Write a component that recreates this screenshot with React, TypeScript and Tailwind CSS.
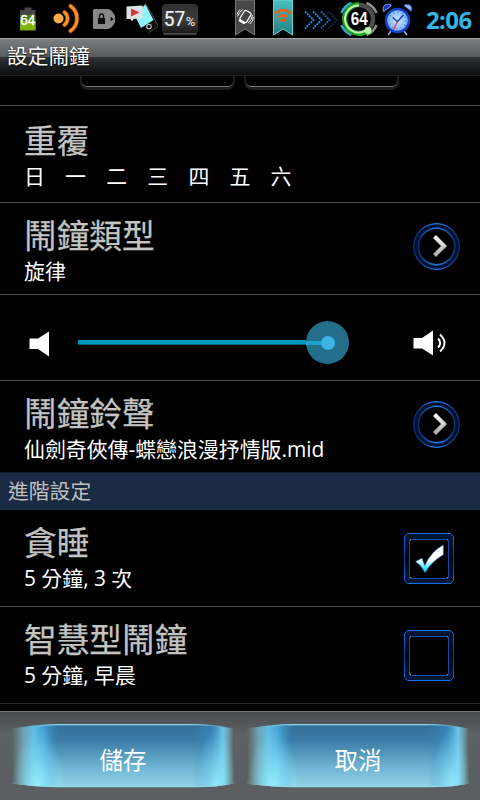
import { ReactNode } from "react";

const days = ["日", "一", "二", "三", "四", "五", "六"];

// Every status icon is drawn on the coordinates of the bar itself
function StatusIcon({ x, w, children }: { x: number; w: number; children: ReactNode }) {
  return (
    <svg className="shrink-0" width={w} height={38} viewBox={`${x} 0 ${w} 38`}>
      {children}
    </svg>
  );
}

function StatusBar() {
  return (
    <header className="flex h-[38px] shrink-0 items-center bg-black pl-4">
      <StatusIcon x={16} w={28}>
        <path d="M24.500 7.500h7v2.500h4v20.500h-15.500V10h4.500z" fill="#454545" />
        <path d="M20 15h15.500v15H20z" fill="#4c7a10" />
        <path d="M20 21h15.500v9.300H20z" fill="#7eb20b" />
        <text x="20.300" y="25" fontSize="14.500" fill="#fff" stroke="#fff" strokeWidth=".4" fontFamily="Liberation Sans, sans-serif" textLength="15" lengthAdjust="spacingAndGlyphs">64</text>
      </StatusIcon>
      <StatusIcon x={44} w={42}>
        <circle cx="58.500" cy="18.500" r="5" fill="#ffaa4a" />
        <g fill="none" stroke="#7a3d08" strokeWidth="4.600" strokeLinecap="round">
          <path d="M64.500 12.300a8 8 0 0 1 0 12.600" />
          <path d="M70.500 6a15.300 15.300 0 0 1 0 25" />
        </g>
        <g fill="none" stroke="#f79425" strokeWidth="3" strokeLinecap="round">
          <path d="M64.500 12.300a8 8 0 0 1 0 12.600" />
          <path d="M70.500 6a15.300 15.300 0 0 1 0 25" />
        </g>
      </StatusIcon>
      <StatusIcon x={86} w={34}>
        <path d="M94 9h14.500q4.500 2 6.500 7v6q-2 5-6.500 7H94l-1-1V10z" fill="#878787" />
        <path d="M98 18h7v6h-7z" fill="#0b0b0b" />
        <path d="M99.500 18v-2a2 2 0 0 1 4 0v2" fill="none" stroke="#0b0b0b" strokeWidth="1.300" />
        <path d="M111 17.500l2 1.500-2 1.500z" fill="#111" stroke="#111" />
      </StatusIcon>
      <StatusIcon x={120} w={40}>
        <path d="M133 12l13-9 11.500 21-2 4-8 4z" fill="#101010" />
        <path d="M145.500 3.500l12 21c.5 2-1 4-9 8" fill="none" stroke="#555" strokeWidth=".9" />
        <path d="M134 14l11.500-9.500 8 15.500-12.500 8z" fill="#8df3f8" />
        <circle cx="149" cy="26.500" r="2.300" fill="#111" stroke="#bbb" strokeWidth="1.100" />
        <path d="M126.500 6.500l16-1v12.500l-9 1-1.500 2.500-1.500-2.500h-4z" fill="#dfe3e4" />
        <path d="M131 8.500l8.500 4-8.500 4z" fill="#d8363a" />
      </StatusIcon>
      <StatusIcon x={160} w={40}>
        <defs>
          <linearGradient id="pct" x1="0" y1="0" x2="0" y2="1">
            <stop offset="0" stopColor="#303030" />
            <stop offset=".55" stopColor="#3c3c3c" />
            <stop offset="1" stopColor="#161616" />
          </linearGradient>
        </defs>
        <rect x="162" y="4" width="36" height="30.500" rx="3.500" fill="url(#pct)" />
        <path d="M163.500 34h33" stroke="#777" strokeWidth="1" />
        <text x="163.800" y="26" fontSize="20.500" fill="#f2f2f2" stroke="#f2f2f2" strokeWidth=".2" fontFamily="Roboto, sans-serif" textLength="21.500" lengthAdjust="spacingAndGlyphs">57</text>
        <text x="185.700" y="26" fontSize="12.500" fill="#eee" fontFamily="Roboto, sans-serif" textLength="9.500" lengthAdjust="spacingAndGlyphs">%</text>
      </StatusIcon>
      <div className="w-[30px] shrink-0" />
      <StatusIcon x={230} w={30}>
        <path d="M235.500 0h19v35l-9.500-6-9.500 6z" fill="#484848" stroke="#777" />
        <rect x="-3.800" y="-5.500" width="7.600" height="11" rx="1.500" transform="translate(245.500 16.500) rotate(32)" fill="#444" stroke="#fff" strokeWidth="1.200" />
        <path d="M239.500 19l6 3.800-1.500 1.500-5.500-3.300z" fill="#fff" />
        <g fill="none" stroke="#eee" strokeWidth="1">
          <path d="M242.500 9.500q-3.500 3-5 7M240 9.500q-2 2-3 5M248 23q4-3 4.500-8M250 24q3-3 3.500-7" />
        </g>
      </StatusIcon>
      <StatusIcon x={260} w={40}>
        <defs>
          <linearGradient id="teal" x1="0" y1="0" x2="0" y2="1">
            <stop offset="0" stopColor="#47bfc0" />
            <stop offset="1" stopColor="#267f82" />
          </linearGradient>
        </defs>
        <path d="M273.500 0h19v35l-9.500-6-9.500 6z" fill="url(#teal)" stroke="#5fd6d6" />
        <g fill="none" stroke="#fa5a0a" strokeWidth="2.400">
          <path d="M275.200 13.500q7.800-7 15.600 0" />
          <path d="M278.300 17.300q4.700-4 9.400 0" />
        </g>
        <ellipse cx="283" cy="20.300" rx="2.600" ry="1.900" fill="#fa5a0a" />
      </StatusIcon>
      <StatusIcon x={300} w={38}>
        <g fill="none" strokeWidth="1.900" strokeDasharray="2 .830">
          <path d="M305 11.500l8.500 8.500-8.500 8.500" stroke="#1b8dff" />
          <path d="M313 11.500l8.500 8.500-8.500 8.500" stroke="#1b8dff" />
          <path d="M321 11.500l8.500 8.500-8.500 8.500" stroke="#126bbd" />
          <path d="M328.500 11.500l8.500 8.500-8.500 8.500" stroke="#0a2e4c" />
        </g>
      </StatusIcon>
      <StatusIcon x={338} w={42}>
        <g fill="none">
          <path d="M341.500 13a18.500 18.500 0 0 1 10-10M341.500 25a18.500 18.500 0 0 0 10 10" stroke="#38a4c8" strokeWidth="2.600" />
          <path d="M366.500 3a18.500 18.500 0 0 1 10 10M376.500 25a18.500 18.500 0 0 1-10 10" stroke="#909090" strokeWidth="2.600" />
          <circle cx="359" cy="19" r="14" stroke="#4d4d4d" strokeWidth="4.500" />
          <path d="M359 4.500a14.500 14.500 0 1 0 9 26" stroke="#1fa319" strokeWidth="5" />
          <path d="M359 5.500a13.500 13.500 0 1 0 8 24" stroke="#c5f3b9" strokeWidth="2" />
        </g>
        <circle cx="368" cy="30.500" r="3.400" fill="#b8f5a4" />
        <text x="350.700" y="25" fontSize="17.500" fontWeight="700" fill="#fff" fontFamily="Liberation Sans, sans-serif" textLength="17" lengthAdjust="spacingAndGlyphs">64</text>
      </StatusIcon>
      <StatusIcon x={380} w={38}>
        <defs>
          <radialGradient id="clock">
            <stop offset="0" stopColor="#c9e7ff" />
            <stop offset="1" stopColor="#75b0fa" />
          </radialGradient>
        </defs>
        <path d="M391 31l-3 4M404 31l3 4" stroke="#8eaee8" strokeWidth="1.600" />
        <path d="M383.500 11.500q-1.500-6 3-7t4.500 1.500z" fill="#1836b8" stroke="#89b0ff" strokeWidth=".9" />
        <path d="M411.500 11.500q1.500-6-3-7t-4.500 1.500z" fill="#8fb9ee" stroke="#1c43c0" strokeWidth=".9" />
        <circle cx="397.500" cy="20.500" r="11.500" fill="url(#clock)" stroke="#173fc7" strokeWidth="2.500" />
        <circle cx="397.500" cy="20.500" r="8.300" fill="none" stroke="#3d70db" strokeWidth="1.200" strokeDasharray="1 3.340" />
        <path d="M392.500 17.500l5 4 6-6.500" fill="none" stroke="#1d3c9b" strokeWidth="1.300" />
        <path d="M397.500 21.500l-4 8" stroke="#e02b72" strokeWidth="1.300" />
      </StatusIcon>
      <span className="ml-[7px] pt-px pl-px text-[24px] leading-[38px] font-bold tracking-[-0.6px] text-[#33b5e5]">2:06</span>
    </header>
  );
}

function Row({ title, note, className, children }: { title: string; note: ReactNode; className: string; children?: ReactNode }) {
  return (
    <section className={`flex shrink-0 items-start justify-between border-b pl-6 ${className}`}>
      <div>
        <h2 className="h-[41px] text-[32.7px] leading-[42px] whitespace-nowrap text-[#c3c3c3] [-webkit-text-stroke:0.25px_#c3c3c3]">{title}</h2>
        <div className="h-[30px] text-[20.9px] leading-[30px] whitespace-nowrap text-white">{note}</div>
      </div>
      {children}
    </section>
  );
}

function ArrowButton() {
  return (
    <button className="mt-[7px] mr-5 h-12 w-12" aria-label="open">
      <svg width="48" height="48" viewBox="-.5 -.5 48 48" fill="none">
        <defs>
          <linearGradient id="ring" x1="0" y1="0" x2="1" y2="0">
            <stop offset="0" stopColor="#07307c" />
            <stop offset=".5" stopColor="#207be8" />
            <stop offset="1" stopColor="#0b3478" />
          </linearGradient>
          <linearGradient id="arrow" x1="0" y1="0" x2="0" y2="1">
            <stop offset="0" stopColor="#f5f5f5" />
            <stop offset="1" stopColor="#aaa" />
          </linearGradient>
        </defs>
        <circle cx="24" cy="24" r="20.500" stroke="#020f2e" strokeWidth="5" />
        <circle cx="24" cy="24" r="22.800" stroke="url(#ring)" strokeWidth="1.200" />
        <circle cx="24" cy="24" r="18.200" stroke="url(#ring)" strokeWidth="1.500" />
        <path d="M22 14l9.500 9.500-9.500 9.500" stroke="url(#arrow)" strokeWidth="4.200" />
      </svg>
    </button>
  );
}

function Checkbox({ checked }: { checked?: boolean }) {
  return (
    <button className="mt-[11px] mr-[26px] h-[51px] w-[50px]" role="checkbox" aria-checked={!!checked}>
      <svg width="50" height="51" viewBox="0 0 50 51" fill="none">
        <defs>
          <linearGradient id="frame" x1="0" y1="0" x2="0" y2="1">
            <stop offset="0" stopColor="#021738" />
            <stop offset=".5" stopColor="#01030f" />
            <stop offset="1" stopColor="#021738" />
          </linearGradient>
          <linearGradient id="edge" x1="0" y1="0" x2="0" y2="1">
            <stop offset="0" stopColor="#1272ee" />
            <stop offset=".5" stopColor="#08379a" />
            <stop offset="1" stopColor="#1272ee" />
          </linearGradient>
          <linearGradient id="tick" x1="0" y1="0" x2="0" y2="1">
            <stop offset=".55" stopColor="#fff" />
            <stop offset=".9" stopColor="#20d8ff" />
          </linearGradient>
        </defs>
        <path d="M3.500.5h43l3 3v44l-3 3h-43l-3-3v-44z" fill="url(#frame)" stroke="url(#edge)" />
        <rect x="5.500" y="6.500" width="39" height="39" rx="1.500" fill="#000" stroke="#0c4bb0" />
        <path d="M6 7h1M43 7h1M6 44.500h1M43 44.500h1" stroke="#999" />
        {checked && (
          <path d="M11.500 28.500l6.500-3.300 2.700 7.500Q27 18.500 39.300 12v9.700Q28 28 21 39.500 17 32 11.500 28.500z" fill="url(#tick)" stroke="#1b86ea" strokeWidth=".6" />
        )}
      </svg>
    </button>
  );
}

function FooterButton({ id, label }: { id: string; label: string }) {
  return (
    <button className="relative h-[64px] w-[222px] text-[23.5px] text-white">
      <svg className="absolute inset-0" width="222" height="64" viewBox="0 0 222 64">
        <defs>
          <linearGradient id={`${id}-fill`} x1="0" y1="0" x2="0" y2="1">
            <stop offset="0" stopColor="#356e98" />
            <stop offset=".25" stopColor="#3a7ba5" />
            <stop offset=".65" stopColor="#6bb1d0" />
            <stop offset="1" stopColor="#97d6e9" />
          </linearGradient>
          <linearGradient id={`${id}-glow`} x1="0" y1="0" x2="1" y2="0">
            <stop offset="0" stopColor="#5c5f62" />
            <stop offset=".05" stopColor="#6fa0ae" />
            <stop offset=".095" stopColor="#62bce4" />
            <stop offset=".14" stopColor="#4eb4ea" stopOpacity=".75" />
            <stop offset=".21" stopColor="#3a96d0" stopOpacity="0" />
            <stop offset=".81" stopColor="#2f87c4" stopOpacity="0" />
            <stop offset=".9" stopColor="#3a96d0" stopOpacity=".5" />
            <stop offset=".95" stopColor="#74cdf2" stopOpacity=".9" />
            <stop offset=".975" stopColor="#6b9dac" />
            <stop offset="1" stopColor="#5c5f62" />
          </linearGradient>
          <radialGradient id={`${id}-shine`}>
            <stop offset="0" stopColor="#a5fbff" />
            <stop offset="1" stopColor="#8ff0ff" stopOpacity="0" />
          </radialGradient>
          <linearGradient id={`${id}-line`} x1="0" y1="0" x2="1" y2="0">
            <stop offset=".06" stopColor="#9ae8f7" stopOpacity="0" />
            <stop offset=".2" stopColor="#8fd9ee" />
            <stop offset=".8" stopColor="#8fd9ee" />
            <stop offset=".96" stopColor="#9ae8f7" stopOpacity="0" />
          </linearGradient>
          <clipPath id={`${id}-shape`}>
            <path d="M0 4.500Q20 1 45 .5H187Q205 1 222 4.500V59.500Q205 63 187 63H45Q20 62.500 0 59.500z" />
          </clipPath>
        </defs>
        <g clipPath={`url(#${id}-shape)`}>
          <rect width="222" height="64" fill={`url(#${id}-fill)`} />
          <rect width="222" height="64" fill={`url(#${id}-glow)`} />
          <ellipse cx="26" cy="62" rx="26" ry="56" fill={`url(#${id}-shine)`} opacity=".8" />
          <ellipse cx="204" cy="62" rx="20" ry="56" fill={`url(#${id}-shine)`} opacity=".7" />
        </g>
        <path d="M0 5Q20 1 45 .7H187Q205 1 222 5M0 59Q20 62.300 45 62.600H187Q205 62.600 222 59" fill="none" stroke={`url(#${id}-line)`} strokeWidth="1.300" />
      </svg>
      <span className="relative top-[5px]">{label}</span>
    </button>
  );
}

function App() {
  return (
    <div className="flex h-[800px] w-[480px] flex-col overflow-hidden bg-black font-['Open_Sans','Noto_Sans_CJK_TC',sans-serif]">
      <StatusBar />
      <h1 className="h-[38px] shrink-0 border-t border-b border-t-[#a0a2a3] border-b-[#252525] bg-[linear-gradient(#7b7f81_0%,#585b5d_50%,#323334_50%,#0c0d0e_100%)] pl-[7px] text-[20.7px] leading-[35px] text-white [text-shadow:0_1px_2px_#000]">
        設定鬧鐘
      </h1>

      <div className="flex h-[30px] shrink-0 items-start gap-[9px] border-b border-[#4d4d4d] pl-20">
        <div className="h-[14px] w-[155px] rounded-b-[8px] border-x-2 border-b-3 border-[#1d1d1d] bg-black">
          <div className="h-[11px] rounded-b-[5px] border-b border-[#757575]" />
        </div>
        <div className="h-[14px] w-[155px] rounded-b-[8px] border-x-2 border-b-3 border-[#1d1d1d] bg-black">
          <div className="h-[11px] rounded-b-[5px] border-b border-[#757575]" />
        </div>
      </div>

      <Row
        className="h-[97px] border-[#4d4d4d] pt-[14px]"
        title="重覆"
        note={
          <div className="flex gap-[20.2px]">
            {days.map((day) => (
              <span key={day}>{day}</span>
            ))}
          </div>
        }
      />
      <Row className="h-[92px] border-[#4d4d4d] pt-3" title="鬧鐘類型" note="旋律">
        <ArrowButton />
      </Row>

      <section className="flex h-[86px] shrink-0 items-center border-b border-[#4d4d4d] pl-[29px]">
        <svg width="21" height="26" viewBox="0 0 21 26" className="mt-[12px]">
          <path d="M.5 7.500H9L20 .5V25.500L9 18H.5z" fill="#fff" />
        </svg>
        <div className="mt-[10px] ml-7 flex h-[44px] w-[272px] items-center">
          <div className="h-[5px] w-[228px] border-b border-[#045e78] bg-[#0099bf]" />
          <div className="flex h-[43px] w-[43px] items-center rounded-full bg-[#226e8b]">
            <div className="h-[4px] w-[15px] bg-[#1fa4cc]" />
            <div className="h-[14px] w-[14px] rounded-full bg-[#3ab5e5]" />
          </div>
        </div>
        <svg width="36" height="26" viewBox="0 0 36 26" className="mt-[10px] ml-[63px]">
          <path d="M.5 8H9L20 .5V25.500L9 18.500H.5z" fill="#fff" />
          <path d="M25 8.500q4.500 4.500 0 9M27 4.500q9 8.500 0 17" fill="none" stroke="#fff" strokeWidth="2" />
        </svg>
      </section>

      <Row className="h-[92px] border-[#101a28] pt-3" title="鬧鐘鈴聲" note="仙劍奇俠傳-蝶戀浪漫抒情版.mid">
        <ArrowButton />
      </Row>
      <h3 className="h-[37px] shrink-0 bg-[#1a2a42] pl-2 text-[20.8px] leading-[37px] text-[#c0c0c0]">進階設定</h3>
      <Row className="h-[97px] border-[#4d4d4d] pt-3" title="貪睡" note="5 分鐘, 3 次">
        <Checkbox checked />
      </Row>
      <Row className="h-[97px] border-[#2a2a2a] pt-3" title="智慧型鬧鐘" note="5 分鐘, 早晨">
        <Checkbox />
      </Row>

      <footer className="mt-[7px] flex h-[89px] shrink-0 items-start gap-[13px] border-t border-[#7a7c7c] bg-[linear-gradient(#494c4d,#5e6164_25%,#5c5f62)] pt-3 pl-3">
        <FooterButton id="save" label="儲存" />
        <FooterButton id="cancel" label="取消" />
      </footer>
    </div>
  );
}

export default App;
